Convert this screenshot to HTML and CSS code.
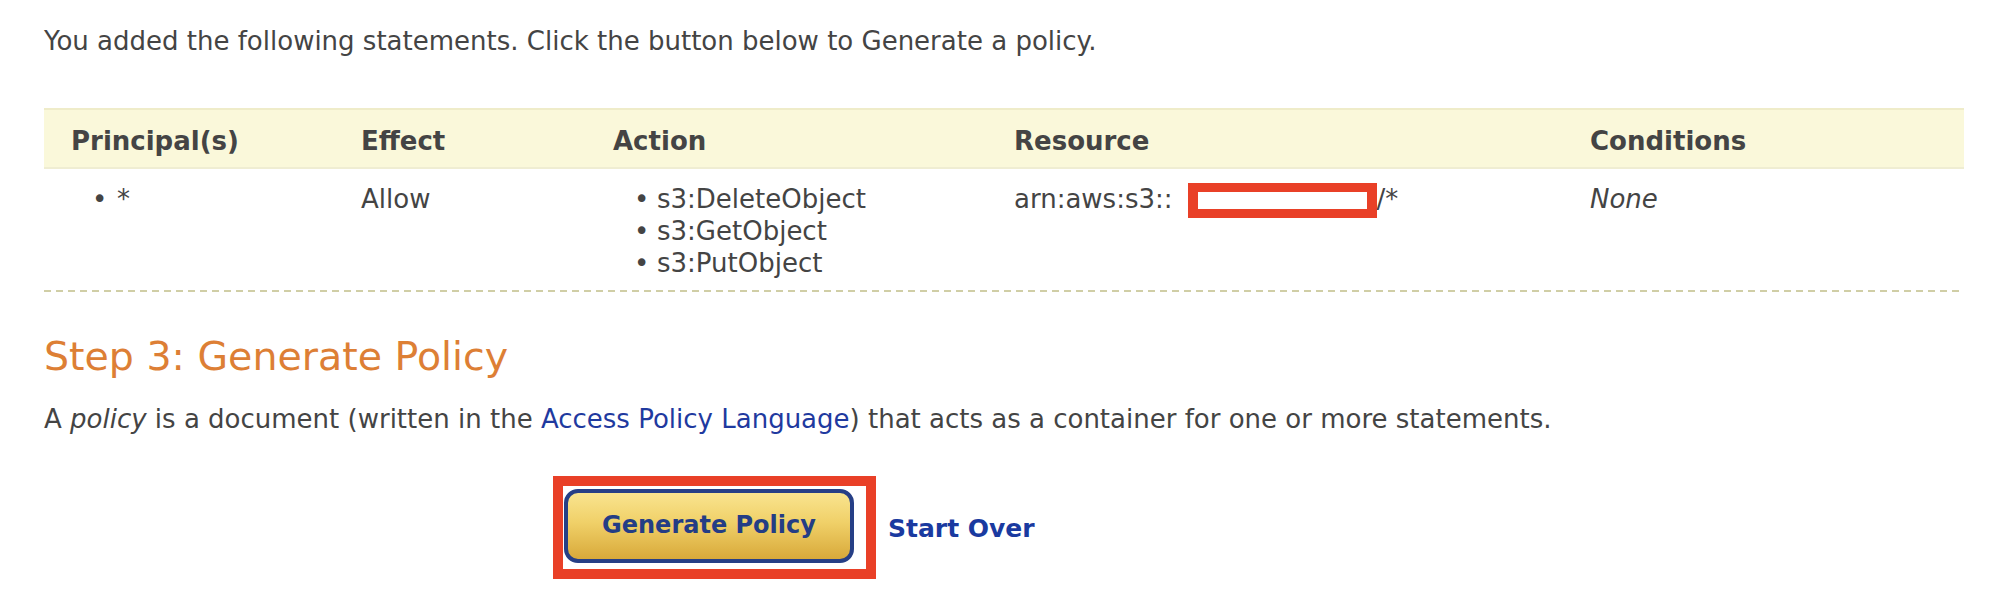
FILE: index.html
```html
<!DOCTYPE html>
<html lang="en">
<head>
<meta charset="utf-8">
<title>Policy Generator</title>
<link rel="stylesheet" href="styles.css">
</head>
<body>
<div class="page">
  <p class="intro">You added the following statements. Click the button below to Generate a policy.</p>

  <div class="stmt-table">
    <div class="row head">
      <div class="cell c1">Principal(s)</div>
      <div class="cell c2">Effect</div>
      <div class="cell c3">Action</div>
      <div class="cell c4">Resource</div>
      <div class="cell c5">Conditions</div>
    </div>
    <div class="row body">
      <div class="cell c1">
        <ul class="blist principal"><li>*</li></ul>
      </div>
      <div class="cell c2">Allow</div>
      <div class="cell c3">
        <ul class="blist actions">
          <li>s3:DeleteObject</li>
          <li>s3:GetObject</li>
          <li>s3:PutObject</li>
        </ul>
      </div>
      <div class="cell c4">arn:aws:s3::<span class="redact"></span>/*</div>
      <div class="cell c5"><em>None</em></div>
    </div>
  </div>

  <h2 class="step">Step 3: Generate Policy</h2>
  <p class="desc">A <em>policy</em> is a document (written in the <a href="#" class="link">Access Policy Language</a>) that acts as a container for one or more statements.</p>

  <div class="actions-bar">
    <span class="highlight"><button class="gen-btn" type="button">Generate Policy</button></span>
    <a href="#" class="start-over">Start Over</a>
  </div>
</div>
</body>
</html>
```

FILE: styles.css
```css
html, body {
  margin: 0;
  padding: 0;
  background: #ffffff;
}

body {
  font-family: "DejaVu Sans", Verdana, sans-serif;
  font-size: 26px;
  line-height: 32px;
  color: #444444;
}

.page {
  padding: 25px 52px 0 44px;
}

.intro {
  margin: 0;
}

.stmt-table {
  margin-top: 51px;
  width: 1920px;
}

.row {
  display: grid;
  grid-template-columns: 317px 252px 401px 576px 1fr;
}

.row.head {
  background: #faf8da;
  border-top: 2px solid #efecc9;
  border-bottom: 2px solid #efedd2;
  font-weight: bold;
  padding: 15px 0 10px;
}

.row.head .c1 {
  padding-left: 27px;
}

.row.body {
  padding: 14px 0 13px;
  background-image: repeating-linear-gradient(to right, #d0cea6 0, #d0cea6 7px, transparent 7px, transparent 12px);
  background-size: 100% 2px;
  background-repeat: no-repeat;
  background-position: left bottom;
}

.blist {
  list-style: none;
  margin: 0;
  padding: 0;
}

.blist li {
  display: flex;
}

.blist li::before {
  content: "\2022";
  display: inline-block;
  flex: none;
}

.principal {
  padding-left: 48px;
}

.principal li::before {
  width: 25px;
}

.actions {
  padding-left: 21px;
}

.actions li::before {
  width: 23px;
}

.redact {
  display: inline-block;
  box-sizing: border-box;
  width: 189px;
  height: 35px;
  margin-left: 15px;
  border: 10px solid #e94027;
  border-top-width: 9px;
  border-bottom-width: 9px;
  background: #ffffff;
  vertical-align: middle;
}

.step {
  margin: 40px 0 0;
  font-size: 39.5px;
  line-height: 48px;
  font-weight: normal;
  color: #dd7f35;
}

.desc {
  margin: 23px 0 0;
}

.link {
  color: #1f3a9f;
  text-decoration: none;
}

.actions-bar {
  display: flex;
  align-items: center;
  margin-top: 41px;
  padding-left: 509px;
}

.highlight {
  display: inline-block;
  border: 10px solid #e94027;
  padding: 3px 12px 6px 0;
  background: #ffffff;
}

.gen-btn {
  display: block;
  width: 290px;
  height: 74px;
  margin-left: 1px;
  border: 4px solid #263f86;
  border-radius: 14px;
  background: linear-gradient(to bottom, #f9e48f 0%, #f0d068 45%, #d8a93a 100%);
  color: #243d85;
  font-family: "DejaVu Sans", Verdana, sans-serif;
  font-size: 24px;
  font-weight: bold;
  padding: 0 0 3px;
  cursor: pointer;
}

.start-over {
  margin-left: 12px;
  margin-top: 2px;
  color: #1a3aa0;
  font-size: 25px;
  font-weight: bold;
  text-decoration: none;
}
```
